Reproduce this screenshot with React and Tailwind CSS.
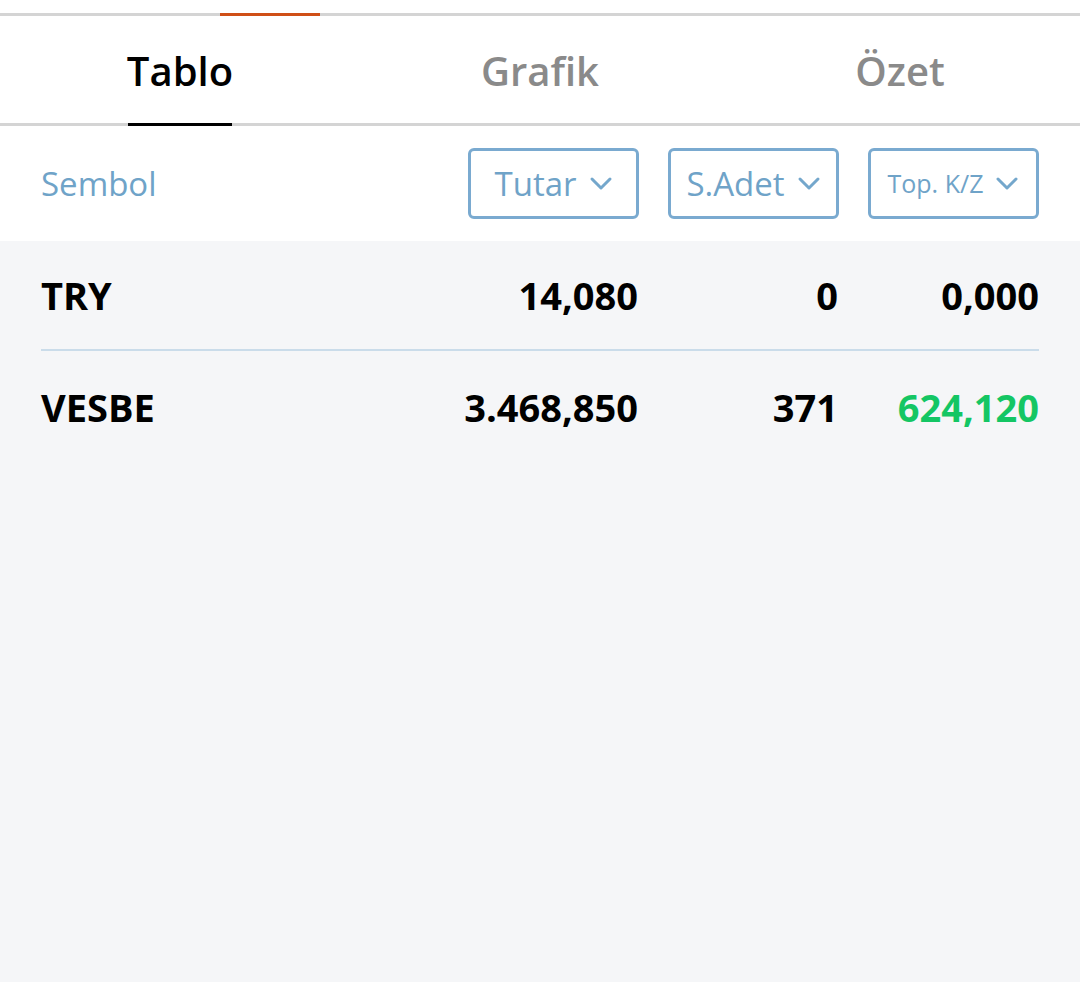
import React from 'react';

const font = { fontFamily: '"Open Sans", "Noto Sans", sans-serif' };

function Chevron() {
  return (
    <svg width="24" height="16" viewBox="0 0 24 16" fill="none" className="shrink-0">
      <path d="M3 3l9 9 9-9" stroke="#74a7cc" strokeWidth="3" strokeLinecap="round" strokeLinejoin="round" />
    </svg>
  );
}

function SortButton({ label, small }) {
  return (
    <button className="flex h-[71px] w-[171px] items-center justify-center gap-[12px] rounded-[6px] border-[3px] border-[#7aaad0] bg-white">
      <span className={small ? 'text-[25px] text-[#6fa3c8]' : 'text-[33px] text-[#6fa3c8]'}>{label}</span>
      <Chevron />
    </button>
  );
}

const rows = [
  { sym: 'TRY', amount: '14,080', qty: '0', pl: '0,000', positive: false },
  { sym: 'VESBE', amount: '3.468,850', qty: '371', pl: '624,120', positive: true },
];

export default function App() {
  return (
    <div className="flex h-[982px] w-[1080px] flex-col bg-white" style={font}>
      <div className="h-[13px] bg-white" />
      <div className="relative h-[3px] bg-[#d4d4d4]">
        <div className="absolute left-[220px] top-0 h-[3px] w-[100px] bg-[#cf4f17]" />
      </div>

      <div className="grid h-[110px] grid-cols-3 border-b-[3px] border-[#d4d4d4]">
        {['Tablo', 'Grafik', 'Özet'].map((t, i) => (
          <div key={t} className="relative flex items-center justify-center pt-[2px]">
            <span className={i === 0 ? 'text-[40px] font-semibold text-black' : 'text-[40px] font-semibold text-[#8a8a8a]'}>
              {t}
            </span>
            {i === 0 && <div className="absolute bottom-[-3px] left-[128px] h-[3px] w-[104px] bg-black" />}
          </div>
        ))}
      </div>

      <div className="flex h-[115px] items-center bg-white pl-[41px] pr-[41px]">
        <span className="flex-1 text-[33px] text-[#6fa3c8]">Sembol</span>
        <div className="flex items-center gap-[29px]">
          <SortButton label="Tutar" />
          <SortButton label="S.Adet" />
          <SortButton label="Top. K/Z" small />
        </div>
      </div>

      <div className="flex-1 bg-[#f5f6f8] px-[41px]">
        {rows.map((r, i) => (
          <div key={r.sym} className={i === 0 ? 'flex h-[110px] items-center border-b-2 border-[#cadcea]' : 'flex h-[112px] items-center'}>
            <span className="flex-1 text-[38px] font-bold text-black">{r.sym}</span>
            <span className="w-[300px] text-right text-[38px] font-bold text-black">{r.amount}</span>
            <span className="w-[200px] text-right text-[38px] font-bold text-black">{r.qty}</span>
            <span className={r.positive ? 'w-[201px] text-right text-[38px] font-bold text-[#14c664]' : 'w-[201px] text-right text-[38px] font-bold text-black'}>
              {r.pl}
            </span>
          </div>
        ))}
      </div>
    </div>
  );
}
